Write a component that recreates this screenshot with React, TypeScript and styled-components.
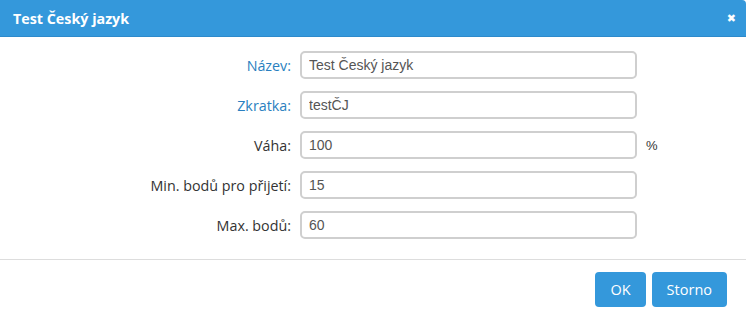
import styled, { createGlobalStyle } from "styled-components";

const GlobalStyle = createGlobalStyle`
  html, body {
    margin: 0;
    padding: 0;
    background: #ffffff;
  }

  body {
    font-family: "Open Sans", "Liberation Sans", sans-serif;
  }
`;

type Field = {
  label: string;
  value: string;
  link?: boolean;
  unit?: string;
};

const fields: Field[] = [
  { label: "Název", value: "Test Český jazyk", link: true },
  { label: "Zkratka", value: "testČJ", link: true },
  { label: "Váha", value: "100", unit: "%" },
  { label: "Min. bodů pro přijetí", value: "15" },
  { label: "Max. bodů", value: "60" },
];

const App = () => {
  return (
    <>
      <GlobalStyle />
      <Dialog>
        <Header>
          <Title>Test Český jazyk</Title>
          <Close>✖</Close>
        </Header>

        <Form>
          {fields.map((f) => (
            <Row key={f.label}>
              <Label $link={f.link}>{f.label}:</Label>
              <Input defaultValue={f.value} />
              <Unit>{f.unit}</Unit>
            </Row>
          ))}
        </Form>

        <Footer>
          <Button>OK</Button>
          <Button>Storno</Button>
        </Footer>
      </Dialog>
    </>
  );
};

const Dialog = styled.div`
  width: 746px;
  height: 323px;
  background: #fff;
  display: flex;
  flex-direction: column;
`;

const Header = styled.div`
  height: 36px;
  border-bottom: 1px solid #2d8acb;
  background: #3498db;
  border-top-right-radius: 4px;

  display: flex;
  align-items: center;
  justify-content: space-between;
  padding: 0 10px 0 13px;
`;

const Title = styled.h1`
  margin: 0;
  font-size: 14.3px;
  font-weight: 700;
  color: #fff;
`;

const Close = styled.span`
  font-family: "DejaVu Sans", sans-serif;
  font-size: 11px;
  font-weight: 700;
  color: #fff;
`;

const Form = styled.div`
  display: grid;
  grid-template-columns: 291px 337px auto;
  column-gap: 9px;
  row-gap: 12px;
  padding: 14px 0 20px 0;
  border-bottom: 1px solid #dddddd;
`;

const Row = styled.div`
  display: contents;
`;

const Label = styled.label<{ $link?: boolean }>`
  align-self: center;
  text-align: right;
  font-size: 14.3px;
  color: ${(p) => (p.$link ? "#2a7fc0" : "#333")};
`;

const Input = styled.input`
  box-sizing: border-box;
  height: 28px;
  width: 100%;
  margin: 0;
  padding: 0 7px;
  border: 2px solid #cfcfcf;
  border-radius: 5px;

  font-family: "Liberation Sans", Arial, sans-serif;
  font-size: 14px;
  color: #555;
  outline: none;
`;

const Unit = styled.span`
  align-self: center;
  font-family: "Liberation Sans", Arial, sans-serif;
  font-size: 13px;
  color: #333;
`;

const Footer = styled.div`
  display: flex;
  justify-content: flex-end;
  gap: 6px;
  padding: 12px 19px 0 0;
`;

const Button = styled.button`
  height: 35px;
  padding: 0 15px;
  border: none;
  border-radius: 4px;
  background: #3498db;

  font-family: "Open Sans", sans-serif;
  font-size: 14.5px;
  color: #fff;
`;

export default App;
